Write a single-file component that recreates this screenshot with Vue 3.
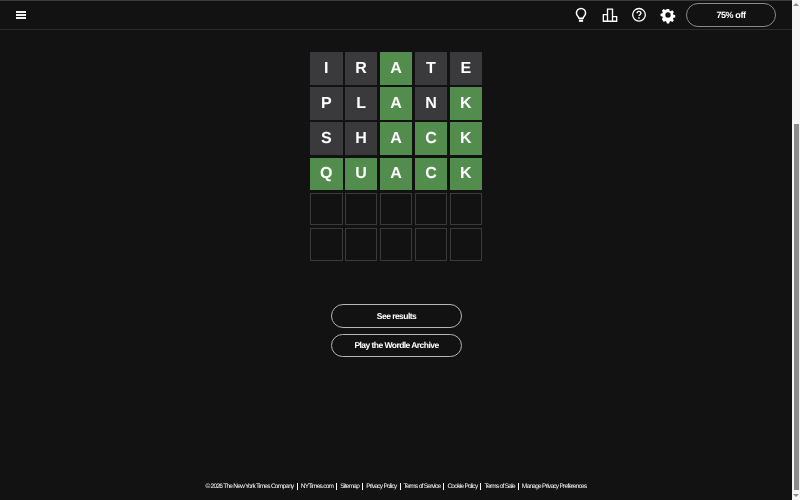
<script setup>
const rows = [
  [["I", "gray"], ["R", "gray"], ["A", "green"], ["T", "gray"], ["E", "gray"]],
  [["P", "gray"], ["L", "gray"], ["A", "green"], ["N", "gray"], ["K", "green"]],
  [["S", "gray"], ["H", "gray"], ["A", "green"], ["C", "green"], ["K", "green"]],
  [["Q", "green"], ["U", "green"], ["A", "green"], ["C", "green"], ["K", "green"]],
  [["", "empty"], ["", "empty"], ["", "empty"], ["", "empty"], ["", "empty"]],
  [["", "empty"], ["", "empty"], ["", "empty"], ["", "empty"], ["", "empty"]],
]

const links = [
  "© 2026 The New York Times Company",
  "NYTimes.com",
  "Sitemap",
  "Privacy Policy",
  "Terms of Service",
  "Cookie Policy",
  "Terms of Sale",
  "Manage Privacy Preferences",
]
</script>

<template>
  <div class="window">
    <div class="page">
      <header class="topbar">
        <button class="menu" aria-label="Menu">
          <span></span><span></span><span></span>
        </button>
        <div class="tools">
          <svg class="tool" viewBox="0 0 24 24" fill="none" stroke="#fff" stroke-width="1.800">
            <path d="M12 4.200a5.500 5.500 0 0 0-5.500 5.500c0 2 1.100 3.300 2.100 4.300.6.600.9 1.200.9 2h5c0-.8.300-1.400.9-2 1-1 2.100-2.300 2.100-4.300A5.500 5.500 0 0 0 12 4.200z" />
            <path d="M9.500 18.800h5" stroke-width="2.800" />
          </svg>
          <svg class="tool" viewBox="0 0 24 24" fill="none" stroke="#fff" stroke-width="1.600">
            <path d="M4 19.500v-8h5v8zM9 19.500V5h6v14.500zM15 19.500v-5.500h5v5.500zM3.200 19.500h17.600" />
          </svg>
          <svg class="tool" viewBox="0 0 24 24" fill="none" stroke="#fff" stroke-width="1.600">
            <circle cx="12" cy="11.800" r="7.600" />
            <path d="M9.700 10a2.300 2.300 0 0 1 4.600 0c0 1.600-2.300 1.700-2.300 3.300" />
            <circle cx="12" cy="15.500" r="1" fill="#fff" stroke="none" />
          </svg>
          <svg class="tool" viewBox="0 0 24 24" fill="#fff">
            <path fill-rule="evenodd" d="M10 1.800h4l.6 3 2 .9 2.600-1.700 2.800 2.800-1.700 2.600.9 2 3 .6v4l-3 .6-.9 2 1.700 2.600-2.800 2.800-2.600-1.700-2 .9-.6 3h-4l-.6-3-2-.9-2.600 1.700L1.600 19l1.700-2.600-.9-2-3-.6v-4l3-.6.9-2L1.600 4.600 4.400 1.800 7 3.500l2-.9zM12 7.500a4.500 4.500 0 1 0 0 9 4.500 4.500 0 0 0 0-9z" transform="translate(3.500 3.500) scale(.71)" />
          </svg>
          <button class="offer">75% off</button>
        </div>
      </header>

      <main class="content">
        <div class="board">
          <div v-for="(row, r) in rows" :key="r" class="row">
            <div v-for="(cell, c) in row" :key="c" class="cell" :class="cell[1]">{{ cell[0] }}</div>
          </div>
        </div>

        <div class="actions">
          <button class="pill">See results</button>
          <button class="pill">Play the Wordle Archive</button>
        </div>
      </main>

      <footer class="legal">
        <span v-for="link in links" :key="link" class="legal-item">{{ link }}</span>
      </footer>
    </div>

    <aside class="scrollbar">
      <span class="arrow up"></span>
      <div class="track"><div class="thumb"></div></div>
      <span class="arrow down"></span>
    </aside>
  </div>
</template>

<style>
html,
body {
  margin: 0;
  overflow: hidden;
}
</style>

<style scoped>
.window {
  display: flex;
  width: 800px;
  height: 500px;
  background: #121213;
  font-family: "Liberation Sans", Arial, sans-serif;
  color: #fff;
  text-rendering: geometricPrecision;
}

.page {
  flex: 1;
  display: flex;
  flex-direction: column;
  min-width: 0;
}

.topbar {
  box-sizing: border-box;
  height: 30px;
  display: flex;
  align-items: center;
  justify-content: space-between;
  padding: 0 16px;
  border-top: 1px solid #3a3a3c;
  border-bottom: 1px solid #2c2c2e;
}

.menu {
  display: flex;
  flex-direction: column;
  gap: 1px;
  width: 10px;
  padding: 0;
  background: none;
  border: 0;
}

.menu span {
  height: 2px;
  background: #f2f2f2;
}

.tools {
  display: flex;
  align-items: center;
  gap: 9px;
}

.tool {
  width: 20px;
  height: 20px;
}

.offer {
  box-sizing: border-box;
  width: 90px;
  height: 24px;
  margin-left: -1px;
  padding: 0;
  border: 1px solid #8a8a8a;
  border-radius: 12px;
  background: none;
  color: #fff;
  font: 700 9px "Liberation Sans", Arial, sans-serif;
  letter-spacing: -0.4px;
  text-rendering: geometricPrecision;
  will-change: transform;
}

.content {
  flex: 1;
  display: flex;
  flex-direction: column;
  align-items: center;
  padding-top: 22.3px;
}

.board {
  display: flex;
  flex-direction: column;
  gap: 2.6px;
  will-change: transform;
}

.row {
  display: flex;
  gap: 2.4px;
}

.cell {
  box-sizing: border-box;
  width: 32.5px;
  height: 32.6px;
  padding-top: 1px;
  display: flex;
  align-items: center;
  justify-content: center;
  font: 700 16px "Liberation Sans", Arial, sans-serif;
}

.gray {
  background: #3a3a3c;
}

.green {
  background: #538d4e;
}

.empty {
  border: 1px solid #3a3a3c;
}

.actions {
  display: flex;
  flex-direction: column;
  gap: 6px;
  margin-top: 43px;
  will-change: transform;
}

.pill {
  box-sizing: border-box;
  width: 131px;
  height: 23.500px;
  padding: 0;
  border: 1px solid #b5b5b5;
  border-radius: 12px;
  background: none;
  color: #fff;
  font: 700 8.500px "Liberation Sans", Arial, sans-serif;
  letter-spacing: -0.55px;
  text-rendering: geometricPrecision;
}

.legal {
  display: flex;
  justify-content: center;
  align-items: center;
  height: 9px;
  margin-bottom: 9px;
  font-size: 6.500px;
  letter-spacing: -0.72px;
  white-space: nowrap;
  will-change: transform;
}

.legal-item + .legal-item {
  margin-left: 3px;
  padding-left: 3px;
  border-left: 1px solid #fff;
}

.scrollbar {
  width: 8px;
  display: flex;
  flex-direction: column;
  align-items: center;
  background: #f5f5f5;
}

.track {
  flex: 1;
  width: 100%;
  padding-top: 115px;
  box-sizing: border-box;
}

.thumb {
  width: 5px;
  height: 366px;
  margin: 0 auto;
  background: #8d8d8d;
}

.arrow {
  width: 0;
  height: 0;
  margin: 3px 0;
  border-left: 3px solid transparent;
  border-right: 3px solid transparent;
}

.up {
  border-bottom: 3px solid #8d8d8d;
}

.down {
  border-top: 3px solid #8d8d8d;
}
</style>
